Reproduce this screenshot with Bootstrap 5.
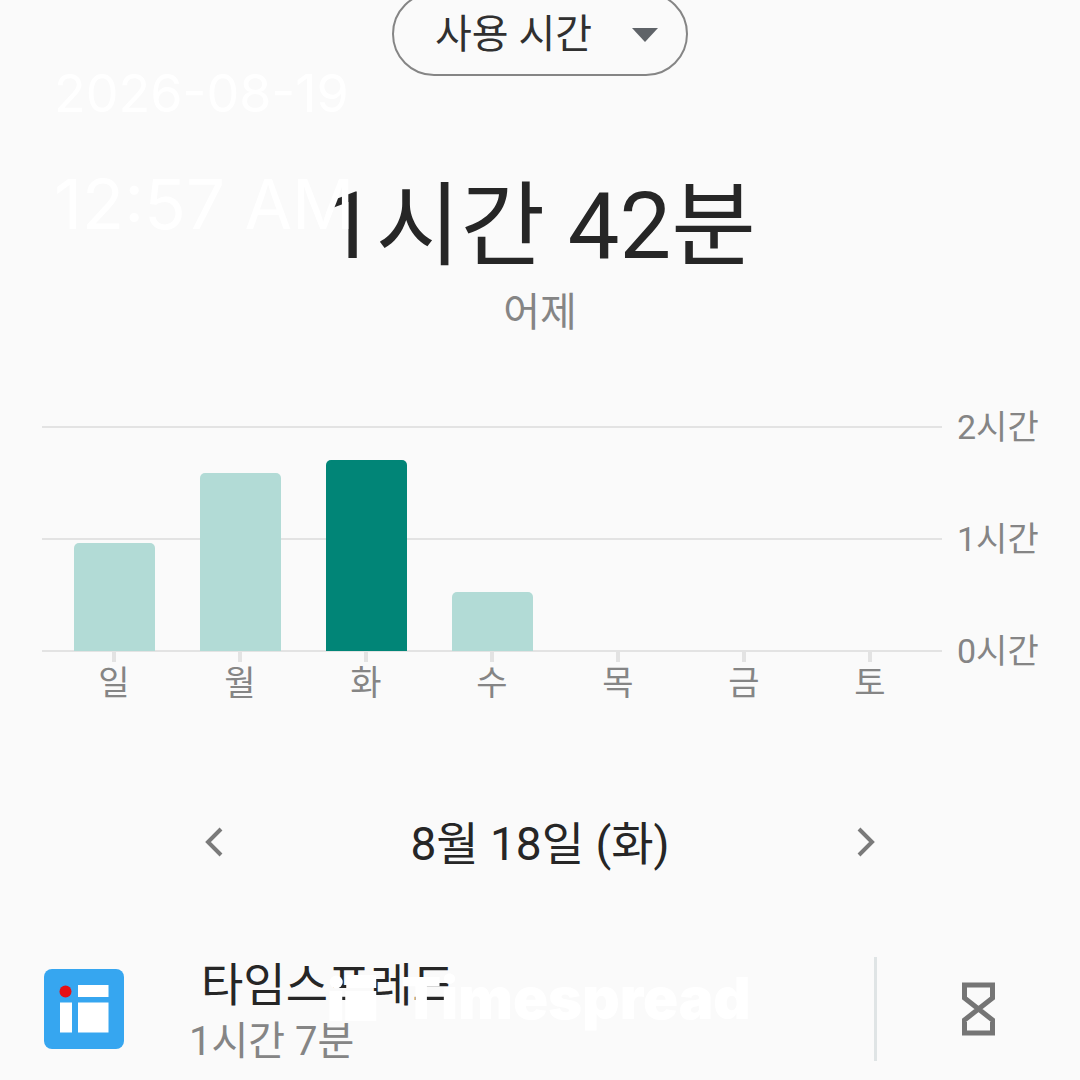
<!DOCTYPE html>
<html lang="ko">
<head>
<meta charset="utf-8">
<meta name="viewport" content="width=device-width, initial-scale=1">
<title>사용 시간</title>
<link href="https://cdn.jsdelivr.net/npm/bootstrap@5.3.0/dist/css/bootstrap.min.css" rel="stylesheet">
<style>
  body { background: #fafafa; color: #262626; font-family: Roboto, "Noto Sans CJK KR", sans-serif; }
  .muted-text { color: #858585; }
  .picker { margin-top: -8px; }
  .picker select { appearance: none; width: 296px; height: 84px; padding: 2px 41px 0; border: 2px solid #858585; border-radius: 42px; background: transparent; color: #303030; font-size: 40px; }
  .picker svg { top: 36px; right: 30px; pointer-events: none; }
  .total-time { margin-top: 101px; font-size: 92px; line-height: 100px; }
  .total-day { margin-top: 12px; font-size: 40px; line-height: 48px; }
  .usage-chart { margin-top: 89px; padding: 0 42px; }
  .plot { height: 226px; padding: 0 9px; border: solid #e3e3e3; border-width: 2px 0; background: linear-gradient(#e3e3e3, #e3e3e3) center / 100% 2px no-repeat; }
  .bar { width: 81px; margin-bottom: -1px; border-radius: 5px 5px 0 0; background: #b2dbd6; }
  .bar.today { background: #018577; }
  .days { padding: 0 9px; font-size: 34px; line-height: 42px; }
  .tick { width: 4px; height: 10px; background: #e3e3e3; }
  .scale { width: 81px; height: 266px; margin: -20px 0 0 15px; font-size: 34px; line-height: 42px; }
  .day-nav { margin-top: 110px; padding: 0 184px; }
  .day-nav h2 { font-size: 46px; line-height: 60px; }
  .plain-btn { padding: 0; border: 0; border-radius: 0; }
  .arrow-btn { width: 60px; height: 60px; padding-bottom: 4px; }
  .app-row { margin-top: 83px; padding-left: 44px; }
  .app-icon { margin-bottom: 10px; }
  .app-text { margin-left: 65px; }
  .app-name { padding-left: 12px; font-size: 46px; line-height: 56px; }
  .app-time { font-size: 40px; line-height: 58px; }
  .app-timer { width: 206px; border-left: 3px solid #dfe4e5; margin: 0 0 10px; }
  .stamp, .brand { color: #fff; font-family: Inter, sans-serif; pointer-events: none; }
  .stamp { top: 61px; left: 54px; }
  .stamp-date { font-size: 52px; line-height: 66px; }
  .stamp-clock { margin-top: 44px; font-size: 69px; line-height: 66px; }
  .brand { top: 970px; left: 50%; transform: translateX(-50%); gap: 24px; font-size: 58px; line-height: 56px; font-weight: 900; }
</style>
<script src="https://cdn.jsdelivr.net/npm/bootstrap@5.3.0/dist/js/bootstrap.bundle.min.js"></script>
</head>
<body class="overflow-x-hidden">
<main class="position-relative">
  <div class="d-flex justify-content-center">
    <div class="picker position-relative">
      <label for="metric" class="visually-hidden">표시 항목</label>
      <select id="metric"><option>사용 시간</option></select>
      <svg class="position-absolute" width="26" height="14" viewBox="0 0 26 14" aria-hidden="true"><path d="M0 0H26L13 14Z" fill="#5f6368"/></svg>
    </div>
  </div>
  <h1 class="total-time fw-normal text-center mb-0">1시간 42분</h1>
  <p class="total-day muted-text text-center mb-0">어제</p>

  <section class="usage-chart d-flex align-items-start" aria-label="요일별 사용 시간">
    <div class="flex-grow-1">
      <div class="plot d-flex align-items-end">
        <div class="col h-100 d-flex align-items-end justify-content-center"><div class="bar" style="height:48.5%"></div></div>
        <div class="col h-100 d-flex align-items-end justify-content-center"><div class="bar" style="height:80%"></div></div>
        <div class="col h-100 d-flex align-items-end justify-content-center"><div class="bar today" style="height:86%"></div></div>
        <div class="col h-100 d-flex align-items-end justify-content-center"><div class="bar" style="height:26.5%"></div></div>
        <div class="col"></div><div class="col"></div><div class="col"></div>
      </div>
      <div class="days muted-text d-flex">
        <div class="col d-flex flex-column align-items-center"><i class="tick"></i><span>일</span></div>
        <div class="col d-flex flex-column align-items-center"><i class="tick"></i><span>월</span></div>
        <div class="col d-flex flex-column align-items-center"><i class="tick"></i><span>화</span></div>
        <div class="col d-flex flex-column align-items-center"><i class="tick"></i><span>수</span></div>
        <div class="col d-flex flex-column align-items-center"><i class="tick"></i><span>목</span></div>
        <div class="col d-flex flex-column align-items-center"><i class="tick"></i><span>금</span></div>
        <div class="col d-flex flex-column align-items-center"><i class="tick"></i><span>토</span></div>
      </div>
    </div>
    <div class="scale muted-text d-flex flex-column justify-content-between text-nowrap">
      <span>2시간</span><span>1시간</span><span>0시간</span>
    </div>
  </section>

  <nav class="day-nav d-flex align-items-center justify-content-between" aria-label="날짜 이동">
    <button type="button" class="btn plain-btn arrow-btn d-flex align-items-center justify-content-center" aria-label="이전 날">
      <svg width="18" height="30" viewBox="0 0 18 30" fill="none" stroke="#7a7a7a" stroke-width="4"><path d="M16 2 3 15 16 28"/></svg>
    </button>
    <h2 class="fw-normal mb-0">8월 18일 (화)</h2>
    <button type="button" class="btn plain-btn arrow-btn d-flex align-items-center justify-content-center" aria-label="다음 날">
      <svg width="18" height="30" viewBox="0 0 18 30" fill="none" stroke="#7a7a7a" stroke-width="4"><path d="M2 2 15 15 2 28"/></svg>
    </button>
  </nav>

  <section class="app-row d-flex align-items-stretch">
    <svg class="app-icon flex-shrink-0 align-self-center" width="80" height="80" viewBox="0 0 80 80" aria-hidden="true">
      <rect width="80" height="80" rx="8" fill="#36a6f0"/>
      <circle cx="21.5" cy="22.5" r="6" fill="#e60f14"/>
      <path d="M34 16H64.500V28H34ZM16 33.500H28V63.500H16ZM34 33.500H64.500V63.500H34Z" fill="#fff"/>
    </svg>
    <div class="app-text flex-grow-1 text-nowrap">
      <div class="app-name">타임스프레드</div>
      <div class="app-time muted-text">1시간 7분</div>
    </div>
    <button type="button" class="btn plain-btn app-timer d-flex align-items-center justify-content-center" aria-label="앱 타이머 설정">
      <svg width="33" height="54" viewBox="0 0 33 54" fill="none" stroke="#757575" stroke-width="5"><path d="M2.500 3H30.500V16L16.500 27 30.500 38V51H2.500V38L16.500 27 2.500 16Z"/></svg>
    </button>
  </section>

  <div class="stamp position-absolute text-nowrap">
    <div class="stamp-date">2026-08-19</div>
    <div class="stamp-clock">12:57 AM</div>
  </div>
  <div class="brand position-absolute d-flex align-items-center">
    <svg width="48" height="48" viewBox="0 0 48 48" fill="#fff" aria-hidden="true">
      <circle cx="7" cy="8" r="6.500"/>
      <path d="M17 1H47V14H17ZM0 17H13V47H0ZM16 17H47V47H16Z"/>
    </svg>
    <span>Timespread</span>
  </div>
</main>
</body>
</html>
